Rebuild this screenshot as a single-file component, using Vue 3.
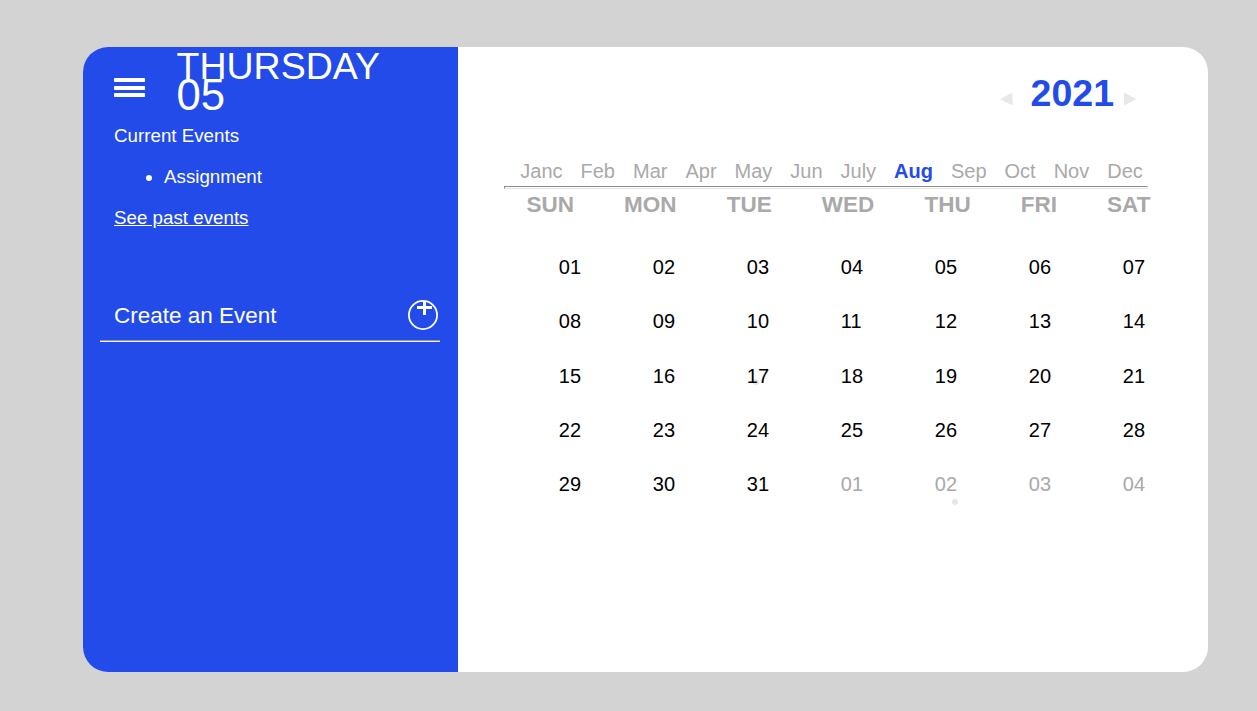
<script setup>
const months = ['Janc', 'Feb', 'Mar', 'Apr', 'May', 'Jun', 'July', 'Aug', 'Sep', 'Oct', 'Nov', 'Dec']
const weekdays = ['SUN', 'MON', 'TUE', 'WED', 'THU', 'FRI', 'SAT']
const days = Array.from({ length: 35 }, (_, i) => ({
  id: i,
  label: String(i < 31 ? i + 1 : i - 30).padStart(2, '0'),
  next: i >= 31,
  mark: i === 16 ? 'mark-inside' : i === 32 ? 'mark-below' : ''
}))
</script>

<template>
  <main class="calendar">
    <aside class="sidebar">
      <header class="today">
        <svg class="menu" width="31" height="20" viewBox="0 0 31 20">
          <rect width="31" height="4" rx=".7" />
          <rect y="8" width="31" height="4" rx=".7" />
          <rect y="15" width="31" height="4" rx=".7" />
        </svg>
        <div class="date">
          <div class="weekday">THURSDAY</div>
          <div class="number">05</div>
        </div>
      </header>
      <section class="events">
        <div>Current Events</div>
        <ul><li>Assignment</li></ul>
        <a class="past">See past events</a>
      </section>
      <div class="create">
        <span>Create an Event</span>
        <svg width="30" height="30" viewBox="0 0 30 30">
          <circle cx="15" cy="15" r="14.1" fill="none" stroke="#fff" stroke-width="1.8" />
          <path d="M9 7.5H24M16.5 1V15" fill="none" stroke="#fff" stroke-width="3" />
        </svg>
      </div>
      <hr class="create-line">
    </aside>
    <section class="content">
      <div class="year">
        <svg width="13" height="14" viewBox="0 0 13 14"><path d="M0 7L12.5 .5V13.5Z" fill="#e8e8e8" /></svg>
        <strong>2021</strong>
        <svg width="13" height="14" viewBox="0 0 13 14"><path d="M12.5 7L0 .5V13.5Z" fill="#e8e8e8" /></svg>
      </div>
      <div class="months">
        <span v-for="m in months" :key="m" :class="{ active: m === 'Aug' }">{{ m }}</span>
      </div>
      <hr class="month-line">
      <div class="weekdays">
        <span v-for="d in weekdays" :key="d">{{ d }}</span>
      </div>
      <div class="days">
        <span v-for="d in days" :key="d.id" class="day" :class="[{ next: d.next }, d.mark]">{{ d.label }}</span>
      </div>
    </section>
  </main>
</template>

<style>
html, body { margin: 0; background: #d3d3d3; }
</style>

<style scoped>
.calendar {
  display: flex;
  width: 1125px;
  height: 625px;
  margin: 47px 0 0 83px;
  border-radius: 25px;
  overflow: hidden;
  background: #fff;
  font-family: "Liberation Sans", Arial, sans-serif;
}
.sidebar { width: 375px; background: #224bea; color: #fff; }
.today { display: flex; height: 73px; padding-left: 31px; }
.menu { margin-top: 31px; fill: #fff; }
.date { margin-left: 31.5px; }
.weekday { font-size: 37.5px; line-height: 38px; }
.number { font-size: 43.75px; line-height: 44px; margin-top: -12px; }
.events { padding-left: 31px; font-size: 18.75px; line-height: 22px; margin-top: 4.5px; }
.events ul { margin: 19px 0; padding-left: 50px; }
.past { text-decoration: underline; }
.create {
  display: flex;
  justify-content: space-between;
  height: 30px;
  margin-top: 71px;
  padding: 0 20px 0 31px;
  font-size: 22.5px;
  line-height: 32px;
}
.create-line {
  height: 0;
  margin: 10px 18px 0 17px;
  border: 0;
  border-top: 1px solid #9a9a9a;
  border-bottom: 1px solid #eee;
}
.content { width: 750px; }
.year {
  display: flex;
  align-items: center;
  justify-content: flex-end;
  height: 44px;
  padding: 24px 71px 0 0;
  color: #224bea;
  font-size: 37.5px;
}
.year strong { margin: 0 10px 0 18px; line-height: 44px; }
.year svg { margin-top: 12px; }
.months {
  display: flex;
  justify-content: space-between;
  margin: 44px 65.2px 0 62.3px;
  color: #a9a9a9;
  font-size: 20px;
  line-height: 24px;
}
.months .active { color: #224bea; font-weight: bold; }
.month-line {
  box-sizing: border-box;
  height: 3px;
  margin: 3px 60px 0 46px;
  border: 1px solid;
  border-color: #8e8e8e #e6e6e6 #e6e6e6 #8e8e8e;
}
.weekdays {
  display: flex;
  justify-content: space-between;
  margin: 3px 57.5px 0 68.5px;
  color: #a9a9a9;
  font-size: 22.5px;
  font-weight: bold;
  line-height: 26px;
}
.days {
  display: grid;
  grid-template-columns: repeat(7, 94px);
  grid-auto-rows: 54.25px;
  margin: 22px 0 0 100.8px;
  font-size: 20px;
  line-height: 54.25px;
}
.day { position: relative; width: 23px; }
.next { color: #a9a9a9; }
.mark-inside::after, .mark-below::after {
  content: "";
  position: absolute;
  z-index: -1;
  width: 6px;
  height: 6px;
  border-radius: 50%;
  background: #e6e6e6;
}
.mark-inside { z-index: 0; }
.mark-inside::after { left: 6px; top: 30.5px; }
.mark-below { z-index: 0; }
.mark-below::after { left: 17px; top: 42px; }
</style>
